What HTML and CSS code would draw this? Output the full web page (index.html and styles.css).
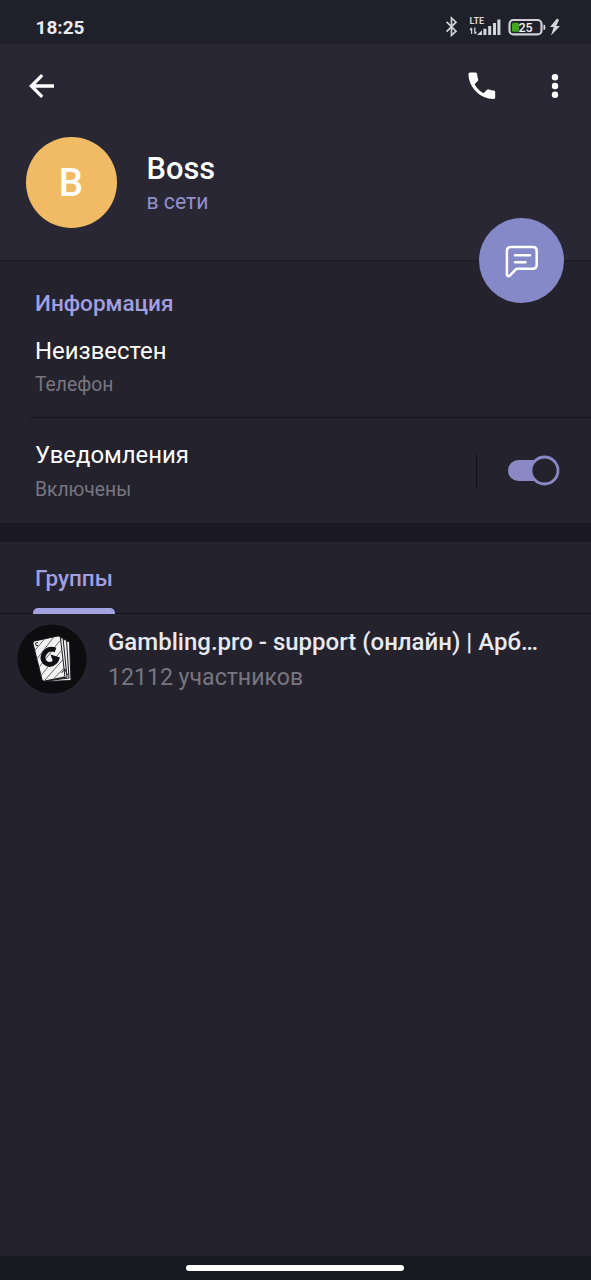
FILE: index.html
```html
<!DOCTYPE html>
<html lang="ru">
<head>
<meta charset="utf-8">
<title>Boss</title>
<link rel="stylesheet" href="styles.css">
</head>
<body>
<div class="screen">
  <div class="statusbar">
    <span class="clock">18:25</span>
    <svg class="status-icons" width="120" height="24" viewBox="0 0 120 24">
      <path class="bt" d="M2.600 6.800L12 16.200L7.500 20.400V3L12 7.200L2.600 16.600"/>
      <text class="lte" x="25.600" y="8.600">LTE</text>
      <path class="arrows" d="M27.600 19V13.200M26 15l1.600-2M30.800 12.600v6M32.400 16.800l-1.600 2"/>
      <path class="signal" d="M33 20L38 15.200V20zM39.400 13.800h3v6.200h-3zM44.200 11h3v9h-3zM49 8h3v12h-3zM53.400 4.500h3V20h-3z"/>
      <rect class="cell" x="65.500" y="5" width="32" height="14.400" rx="4"/>
      <rect class="charge" x="68" y="7.700" width="7" height="9" rx="1.500"/>
      <path class="signal" d="M99.500 9.500q1.800 0 1.800 1.500v2.500q0 1.500-1.800 1.500z"/>
      <text class="percent" x="74.500" y="16.800">25</text>
      <path class="signal" d="M113 3.500L106 12h3.700L107 20.500L116 11h-3.800L115 5z"/>
    </svg>
  </div>

  <header class="header">
    <div class="toolbar">
      <svg class="back" width="28" height="28" viewBox="0 0 28 28"><path d="M26 14H4M14.200 3.200L3.400 14L14.200 24.800"/></svg>
      <svg class="phone" width="28" height="28" viewBox="0 0 28 28"><path d="M2 .5h5.600q1.300 0 1.500 1.500.2 2.700 1 5 .4 1.100-.4 2L6.600 12.200q3.200 6 9 9l3.400-3.400q.8-.7 1.800-.4 2.500.8 5 1 1.400.2 1.400 1.500v5.700q0 1.400-1.500 1.400C12.500 27 .5 15.500.5 2Q.5.500 2 .5z"/></svg>
      <svg class="dots" width="8" height="26" viewBox="0 0 8 26"><circle cx="4" cy="4.200" r="3.200"/><circle cx="4" cy="13" r="3.200"/><circle cx="4" cy="21.800" r="3.200"/></svg>
    </div>
    <div class="profile">
      <div class="avatar">B</div>
      <div class="who">
        <div class="name">Boss</div>
        <div class="online">в сети</div>
      </div>
    </div>
    <div class="fab">
      <svg width="36" height="36" viewBox="0 0 36 36"><path d="M6.900 4h21.800q4 0 4 4V21.700q0 4-4 4H12.600L5.800 32.600Q2.900 34.200 2.900 31V8q0-4 4-4z"/><path d="M11 12.300h15M11 19.200h10.500"/></svg>
    </div>
  </header>

  <section class="info">
    <div class="section-title">Информация</div>
    <div class="value phone-value">Неизвестен</div>
    <div class="hint">Телефон</div>
  </section>

  <section class="notifications">
    <div class="labels">
      <div class="value notify-value">Уведомления</div>
      <div class="hint notify-hint">Включены</div>
    </div>
    <div class="divider"></div>
    <svg class="switch" width="54" height="32" viewBox="0 0 54 32"><rect class="track" x="1" y="5" width="40" height="21" rx="10.500"/><circle class="thumb" cx="37.500" cy="15.500" r="13.500"/></svg>
  </section>

  <div class="gap"></div>

  <nav class="tabs"><div class="tab">Группы</div></nav>

  <main class="list">
    <div class="group">
      <svg class="logo" width="70" height="70" viewBox="0 0 70 70">
        <circle class="disc" cx="35" cy="35" r="34.600"/>
        <path class="card" d="M43 16.500L52.500 17.500L54 56.500L29 57.500z"/>
        <path class="card" d="M41 15L49.500 16L52 54L28 57z"/>
        <path class="card" d="M39 13.500L46 14L50 53L27 57.500z"/>
        <path class="card" d="M17.500 17L41 12Q43 11.500 43.400 13.500L47.800 51Q47.900 52.800 46 53.300L27.500 57Q25.500 57.500 25 55.500L16 19.500Q15.700 17.500 17.500 17z"/>
        <path class="hatch" d="M17.500 27L27 15.500M19.500 35.500L36.500 13.500M21.500 44L43 16.500M23.500 52L44.500 26.500M28 56L46 35.500M37 54.500L47 44"/>
        <path class="g" d="M38.500 26Q32 23.500 28 28.500Q23.800 34 28 38.500Q32.500 42.500 37.500 38.500L40 35.500"/>
        <path class="g-bar" d="M33.500 30.500L43 33.500L41.500 37L36 37.500z"/>
        <path class="pip" d="M18.500 19l2.500-.5M18.500 19l.7 2.800 2-.5"/>
        <path class="pip" d="M44.500 49l3.500-4 2.500 6"/>
      </svg>
      <div class="group-text">
        <div class="group-name">Gambling.pro - support (онлайн) | Арб…</div>
        <div class="members">12112 участников</div>
      </div>
    </div>
  </main>

  <footer class="navbar"><div class="pill"></div></footer>
</div>
</body>
</html>
```
FILE: styles.css
```css
* { box-sizing: border-box; }
body { margin: 0; background: #24222c; font-family: Roboto, "Noto Sans", sans-serif; }
.screen { width: 591px; height: 1280px; display: flex; flex-direction: column; background: #24222c; overflow: hidden; white-space: nowrap; }
svg { display: block; fill: none; flex: none; }

.statusbar { height: 44px; flex: none; display: flex; justify-content: space-between; align-items: center; padding: 10px 27px 0 35.500px; background: #20202a; }
.clock { font-size: 19px; line-height: 22px; padding-top: 1px; font-weight: 700; color: #e9e9ef; }
.bt { stroke: #d0d0d8; stroke-width: 1.7; stroke-linejoin: miter; }
.lte { fill: #d8d8de; font-size: 9px; font-weight: 700; }
.arrows { stroke: #d0d0d8; stroke-width: 1.3; }
.signal { fill: #d4d4da; }
.cell { stroke: #d0d0d4; stroke-width: 2.2; }
.charge { fill: #43a51d; }
.percent { fill: #f0f0f4; font-size: 12.5px; font-weight: 500; }

.header { position: relative; height: 218px; flex: none; background: #282733; border-bottom: 2px solid #1f1e28; }
.toolbar { height: 84px; display: flex; align-items: center; padding: 0 32px 0 28px; }
.back path { stroke: #fff; stroke-width: 3.3; }
.phone { margin-left: auto; margin-right: 55px; }
.phone path, .dots circle { fill: #fff; }
.profile { display: flex; padding: 9px 0 0 25.500px; }
.avatar { width: 91px; height: 91px; border-radius: 50%; background: #f0bb64; color: #fff; font-size: 38.5px; font-weight: 500; line-height: 92px; text-align: center; }
.who { padding: 14px 0 0 30px; }
.name { font-size: 30.8px; line-height: 36px; font-weight: 500; color: #fff; }
.online { font-size: 21.2px; line-height: 30px; color: #9390cb; }
.fab { position: absolute; left: 479px; top: 174px; width: 85px; height: 85px; border-radius: 50%; background: #8689c8; display: flex; align-items: center; justify-content: center; }
.fab path { stroke: #fff; stroke-width: 2.5; stroke-linecap: round; stroke-linejoin: round; }

.info { height: 155px; flex: none; padding: 26px 0 0 35px; }
.section-title { font-size: 22.5px; line-height: 30px; font-weight: 500; color: #a09fe0; }
.value { font-size: 23.9px; line-height: 30px; color: #fff; }
.phone-value { margin-top: 18px; }
.hint { font-size: 19.3px; line-height: 26px; margin-top: 6px; color: #777680; }

.notifications { height: 106px; flex: none; display: flex; align-items: center; margin-left: 30px; padding: 0 30.500px 0 5px; border-top: 1px solid #16151e; }
.labels { flex: 1; padding-top: 1px; }
.notify-hint { margin-top: 7px; }
.divider { width: 1px; height: 34px; margin-right: 30px; background: #14131c; }
.track { fill: #8a88c5; }
.thumb { fill: #24222c; stroke: #8a88c5; stroke-width: 2.8; }

.gap { height: 19px; flex: none; background: #1a1923; }
.tabs { height: 72px; flex: none; display: flex; padding-left: 33px; border-bottom: 1px solid #14131b; }
.tab { width: 82px; height: 71px; padding: 21px 0 0 2px; font-size: 22.5px; line-height: 30px; font-weight: 500; color: #a09fe0; }
.tab::after { content: ""; display: block; width: 82px; height: 6px; margin: 15px 0 0 -2px; border-radius: 5px 5px 0 0; background: #a4a2e2; }

.list { flex: 1; }
.group { display: flex; padding: 10px 0 0 17px; }
.disc { fill: #0d0d0f; }
.card { fill: #f2f2f2; stroke: #18181a; stroke-width: 1; }
.hatch { stroke: #444; stroke-width: .8; }
.g { stroke: #101012; stroke-width: 4.8; }
.g-bar { fill: #101012; }
.pip { stroke: #222; stroke-width: 1; }
.group-text { padding: 3px 0 0 21px; }
.group-name { font-size: 24px; line-height: 30px; font-weight: 500; color: #e9e9f1; }
.members { font-size: 23.1px; line-height: 30px; margin-top: 6px; color: #777680; }

.navbar { height: 24px; flex: none; background: #191922; padding: 9px 0 0 186px; }
.pill { width: 218px; height: 6px; border-radius: 3px; background: #fff; }
```
